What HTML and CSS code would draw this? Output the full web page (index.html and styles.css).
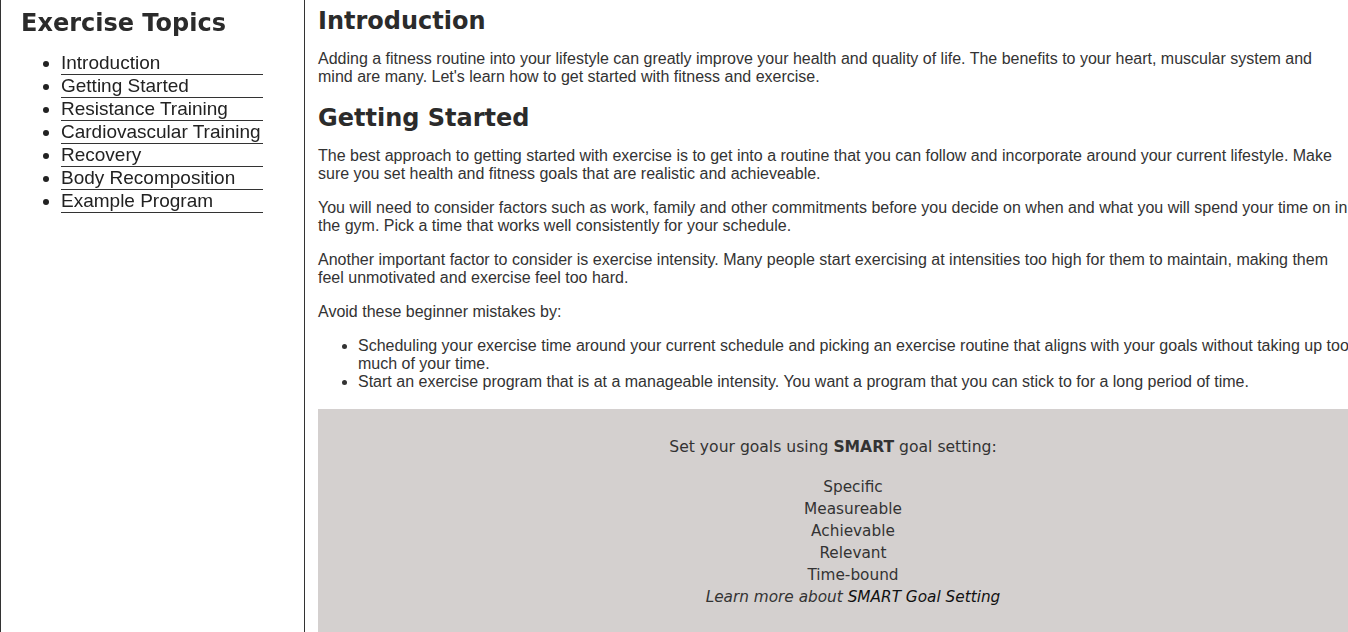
FILE: index.html
```html
<!DOCTYPE html>
<html lang="en">
<head>
<meta charset="utf-8">
<title>Exercise Topics</title>
<link rel="stylesheet" href="styles.css">
</head>
<body>
<nav id="navbar" class="navbar">
  <header class="nav-title">Exercise Topics</header>
  <ul class="nav-list">
    <li><a class="nav-link" href="#Introduction">Introduction</a></li>
    <li><a class="nav-link" href="#Getting_Started">Getting Started</a></li>
    <li><a class="nav-link" href="#Resistance_Training">Resistance Training</a></li>
    <li><a class="nav-link" href="#Cardiovascular_Training">Cardiovascular Training</a></li>
    <li><a class="nav-link" href="#Recovery">Recovery</a></li>
    <li><a class="nav-link" href="#Body_Recomposition">Body Recomposition</a></li>
    <li><a class="nav-link" href="#Example_Program">Example Program</a></li>
  </ul>
</nav>
<main id="main-doc" class="main">
  <section class="main-section" id="Introduction">
    <header class="sec-title">Introduction</header>
    <p>Adding a fitness routine into your lifestyle can greatly improve your health and quality of life. The benefits to your heart, muscular system and mind are many. Let's learn how to get started with fitness and exercise.</p>
  </section>
  <section class="main-section" id="Getting_Started">
    <header class="sec-title">Getting Started</header>
    <p>The best approach to getting started with exercise is to get into a routine that you can follow and incorporate around your current lifestyle. Make sure you set health and fitness goals that are realistic and achieveable.</p>
    <p>You will need to consider factors such as work, family and other commitments before you decide on when and what you will spend your time on in the gym. Pick a time that works well consistently for your schedule.</p>
    <p>Another important factor to consider is exercise intensity. Many people start exercising at intensities too high for them to maintain, making them feel unmotivated and exercise feel too hard.</p>
    <p>Avoid these beginner mistakes by:</p>
    <ul class="tips">
      <li>Scheduling your exercise time around your current schedule and picking an exercise routine that aligns with your goals without taking up too much of your time.</li>
      <li>Start an exercise program that is at a manageable intensity. You want a program that you can stick to for a long period of time.</li>
    </ul>
    <div class="smart-box">
      <p class="smart-intro">Set your goals using <strong>SMART</strong> goal setting:</p>
      <ul class="smart-list">
        <li>Specific</li>
        <li>Measureable</li>
        <li>Achievable</li>
        <li>Relevant</li>
        <li>Time-bound</li>
        <li><em>Learn more about <a class="smart-link" href="#">SMART Goal Setting</a></em></li>
      </ul>
    </div>
  </section>
</main>
</body>
</html>
```
FILE: styles.css
```css
html, body {
  margin: 0;
  padding: 0;
}
html {
  overflow-x: hidden;
}
body {
  font-family: "Liberation Sans", Arial, sans-serif;
  font-size: 16px;
  color: #333;
  background: #fff;
}
.navbar {
  position: fixed;
  top: 0;
  left: 0;
  height: 100vh;
  border-left: 1px solid #333;
  border-right: 1px solid #333;
  box-sizing: border-box;
  width: 305px;
  padding-left: 20px;
}
.nav-title {
  font-family: "DejaVu Sans", Verdana, sans-serif;
  font-weight: bold;
  font-size: 24px;
  color: #2b2b2b;
  margin-top: 9px;
  line-height: 28px;
}
.nav-list {
  margin: 15px 0 0 0;
  padding-left: 40px;
  font-size: 19px;
  line-height: 22px;
  color: #222;
}
.nav-link {
  display: block;
  width: 202px;
  color: #222;
  text-decoration: none;
  border-bottom: 1px solid #333;
  line-height: 22px;
}
.main {
  margin-left: 318px;
  margin-right: -2px;
}
.sec-title {
  font-family: "DejaVu Sans", Verdana, sans-serif;
  font-weight: bold;
  font-size: 24px;
  color: #2b2b2b;
  line-height: 28px;
  margin: 18px 0 15px;
}
.main-section:first-child .sec-title {
  margin-top: 7px;
}
.main-section p {
  margin: 0 0 16px;
  line-height: 18px;
}
.tips {
  margin: 0 0 18px;
  padding-left: 40px;
  line-height: 18px;
}
.smart-box {
  background: #d4d0cf;
  padding: 27px 2px 26px 0;
  text-align: center;
  font-family: "DejaVu Sans", Verdana, sans-serif;
  font-size: 15.6px;
  color: #333;
}
.smart-box .smart-intro {
  margin: 0 0 18px;
  line-height: 22px;
}
.smart-list {
  list-style: none;
  margin: 0;
  padding-left: 40px;
  line-height: 22px;
  font-size: 15.3px;
}
.smart-link {
  color: #111;
  text-decoration: none;
}
```
